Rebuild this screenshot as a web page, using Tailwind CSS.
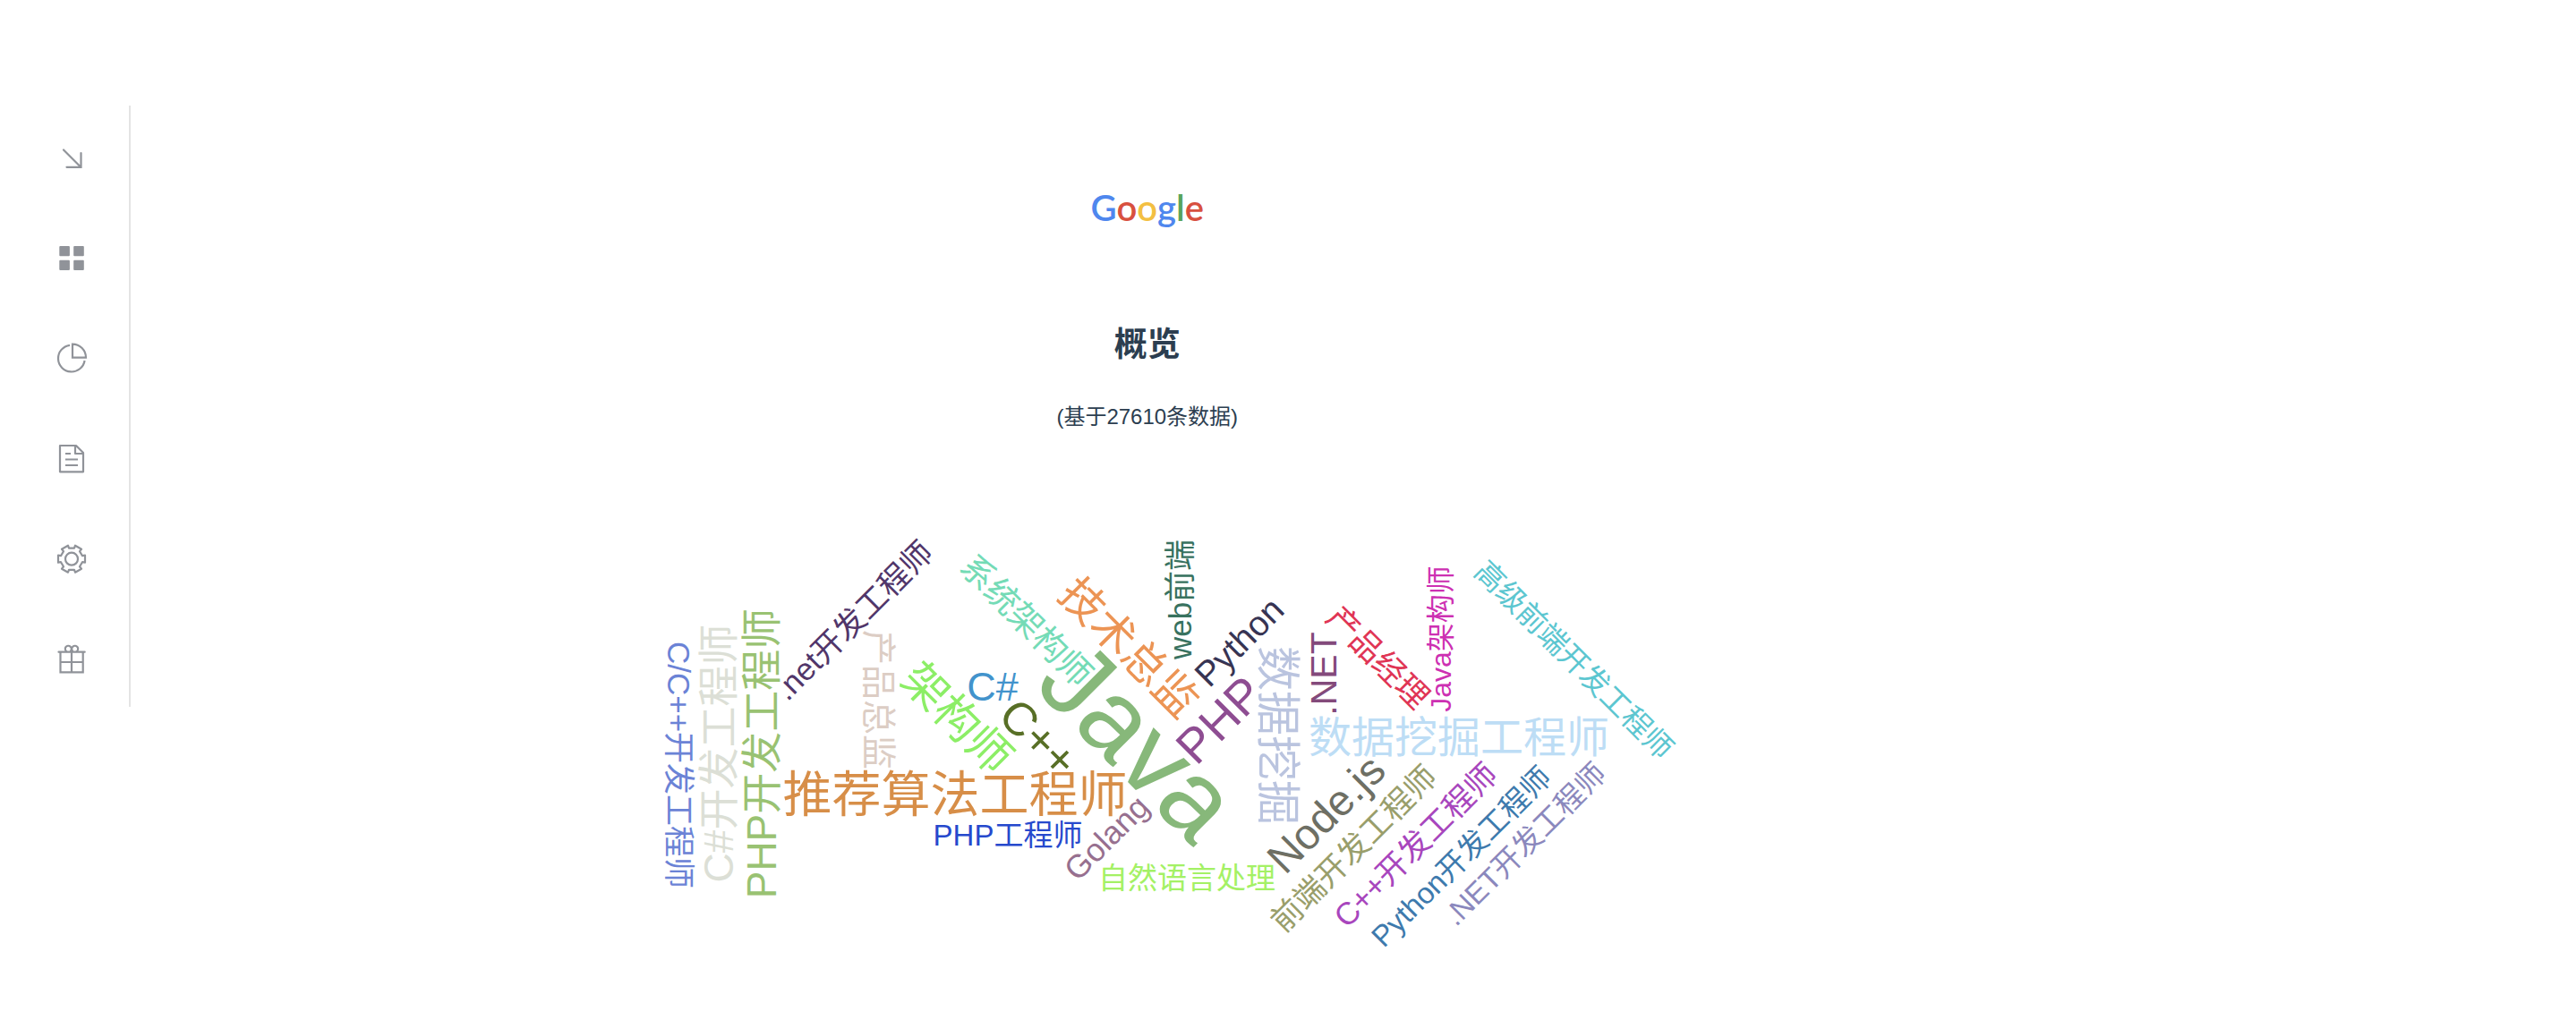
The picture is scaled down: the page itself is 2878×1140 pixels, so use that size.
<!DOCTYPE html>
<html lang="zh-CN">
<head>
<meta charset="utf-8">
<title>概览</title>
<script src="https://cdn.jsdelivr.net/npm/@tailwindcss/browser@4"></script>
</head>
<body class="min-h-screen bg-white font-['Liberation_Sans','Noto_Sans_CJK_SC',sans-serif] text-[#2c3e50]">
<div class="flex items-start pt-[118px]">
  <nav class="flex w-[146px] shrink-0 flex-col border-r-2 border-[#e4e4e4] text-[#909399]" aria-label="菜单">
    <button class="flex h-28 items-center pl-15" aria-label="收起">
      <svg class="size-10" viewBox="0 0 40 40" fill="none" stroke="currentColor" stroke-width="2.2" stroke-linecap="round"><path d="M11 13.5L30 32.5M30.5 17V32.8H14.5"/></svg>
    </button>
    <button class="flex h-28 items-center pl-15" aria-label="概览">
      <svg class="size-10" viewBox="0 0 40 40" fill="currentColor"><rect x="6.3" y="9" width="11.6" height="11.3" rx="1"/><rect x="22.2" y="9" width="11.6" height="11.3" rx="1"/><rect x="6.3" y="24.7" width="11.6" height="11.3" rx="1"/><rect x="22.2" y="24.7" width="11.6" height="11.3" rx="1"/></svg>
    </button>
    <button class="flex h-28 items-center pl-15" aria-label="图表">
      <svg class="size-10" viewBox="0 0 40 40" fill="none" stroke="currentColor" stroke-width="2.2"><path d="M21 6.7A15 15 0 0 1 36 21.7H21Z"/><path d="M18 7.8A14.9 14.9 0 1 0 34.6 25"/></svg>
    </button>
    <button class="flex h-28 items-center pl-15" aria-label="文档">
      <svg class="size-10" viewBox="0 0 40 40" fill="none" stroke="currentColor" stroke-width="2.2" stroke-linejoin="round"><path d="M7 8H25L33 16V37.3H7ZM24 8V17H33M13 17H19M13 23.5H27M13 30H27"/></svg>
    </button>
    <button class="flex h-28 items-center pl-15" aria-label="设置">
      <svg class="size-10" viewBox="-20 -22.7 40 40" fill="none" stroke="currentColor" stroke-width="2.2" stroke-linejoin="round"><circle r="7"/><path d="M12-3.5L15-4V4L12 3.5L9 8.6L11 11L4 15L3 12.1H-3L-4 15L-11 11L-9 8.6L-12 3.5L-15 4V-4L-12-3.5L-9-8.6L-11-11L-4-15L-3-12.1H3L4-15L11-11L9-8.6Z"/></svg>
    </button>
    <button class="flex h-28 items-center pl-15" aria-label="礼物">
      <svg class="size-10" viewBox="0 0 40 40" fill="none" stroke="currentColor" stroke-width="2.2" stroke-linecap="round"><path d="M5.5 14.7H34.7M7.5 15V37.3H32.7V15M7.5 26H32.7M20 15V37"/><path d="M14.2 14A3.5 3.5 0 1 1 19 13.5M21 13.5A3.5 3.5 0 1 1 25.8 14"/></svg>
    </button>
  </nav>

  <main class="mr-[16%] flex min-w-0 flex-1 flex-col items-center">
    <a href="#" class="mt-21 font-[Lato] text-[40px] leading-[60px] font-semibold"><span class="text-[#4f87ee]">G</span><span class="text-[#d8503f]">o</span><span class="text-[#f3bf42]">o</span><span class="text-[#4f87ee]">g</span><span class="text-[#58a55c]">l</span><span class="text-[#d8503f]">e</span></a>
    <h3 class="mt-24 text-[37px] leading-[56px] font-bold">概览</h3>
    <p class="mt-8 text-2xl leading-[40px]">(基于27610条数据)</p>
    <svg class="mt-[94px] w-full max-w-[1200px]" viewBox="0 0 1200 500" role="img" aria-label="职位词云" text-anchor="middle">
      <g id="cloud">
        <text transform="translate(592 247) rotate(45)" dy=".36em" font-size="120" fill="#87b87a">Java</text>
        <text transform="translate(385 307)" dy=".37em" font-size="55" fill="#d78e48">推荐算法工程师</text>
        <text transform="translate(680 224) rotate(-45)" dy=".36em" font-size="54" fill="#8e4d92">PHP</text>
        <text transform="translate(479 244) rotate(45)" dy=".36em" font-size="52" fill="#586f26">C++</text>
        <text transform="translate(388 222) rotate(45)" dy=".37em" font-size="50" fill="#8cee66">架构师</text>
        <text transform="translate(746 242) rotate(90)" dy=".37em" font-size="50" fill="#bac4df">数据挖掘</text>
        <text transform="translate(580 143) rotate(45)" dy=".37em" font-size="49" fill="#ec9454">技术总监</text>
        <text transform="translate(948 243)" dy=".37em" font-size="48" fill="#bdddf5">数据挖掘工程师</text>
        <text transform="translate(799 329) rotate(-45)" dy=".36em" font-size="48" fill="#6e6f64">Node.js</text>
        <text transform="translate(120 262) rotate(-90)" dy=".37em" font-size="46" fill="#dcdfd6">C#开发工程师</text>
        <text transform="translate(168 262) rotate(-90)" dy=".37em" font-size="46" fill="#99c272">PHP开发工程师</text>
        <text transform="translate(427 187)" dy=".36em" font-size="45" fill="#4293cc">C#</text>
        <text transform="translate(796 173) rotate(-90)" dy=".36em" font-size="41" fill="#834a7b">.NET</text>
        <text transform="translate(702 137) rotate(-45)" dy=".36em" font-size="39" fill="#373453">Python</text>
        <text transform="translate(300 202) rotate(90)" dy=".37em" font-size="39" fill="#dccdc4">产品总监</text>
        <text transform="translate(465 113) rotate(45)" dy=".37em" font-size="38" fill="#74dbb6">系统架构师</text>
        <text transform="translate(858 154) rotate(45)" dy=".37em" font-size="36" fill="#e03555">产品经理</text>
        <text transform="translate(554 356) rotate(-45)" dy=".36em" font-size="36" fill="#97708f">Golang</text>
        <text transform="translate(77 275) rotate(90)" dy=".37em" font-size="35" fill="#6b83d6">C/C++开发工程师</text>
        <text transform="translate(271 113) rotate(-45)" dy=".37em" font-size="35" fill="#51366a">.net开发工程师</text>
        <text transform="translate(636 90) rotate(-90)" dy=".37em" font-size="35" fill="#38725f">web前端</text>
        <text transform="translate(830 368) rotate(-45)" dy=".37em" font-size="35" fill="#999e6b">前端开发工程师</text>
        <text transform="translate(899 364) rotate(-45)" dy=".37em" font-size="35" fill="#a846bd">C++开发工程师</text>
        <text transform="translate(950 377) rotate(-45)" dy=".37em" font-size="33" fill="#3e7aad">Python开发工程师</text>
        <text transform="translate(1021 363) rotate(-45)" dy=".37em" font-size="33" fill="#8b88bd">.NET开发工程师</text>
        <text transform="translate(1077 157) rotate(45)" dy=".37em" font-size="33" fill="#5cc6d0">高级前端开发工程师</text>
        <text transform="translate(444 353)" dy=".37em" font-size="33" fill="#2649cd">PHP工程师</text>
        <text transform="translate(644 401)" dy=".37em" font-size="33" fill="#a4f165">自然语言处理</text>
        <text transform="translate(927 134) rotate(-90)" dy=".37em" font-size="32" fill="#cd30b2">Java架构师</text>
      </g>
    </svg>
  </main>
</div>
</body>
</html>
